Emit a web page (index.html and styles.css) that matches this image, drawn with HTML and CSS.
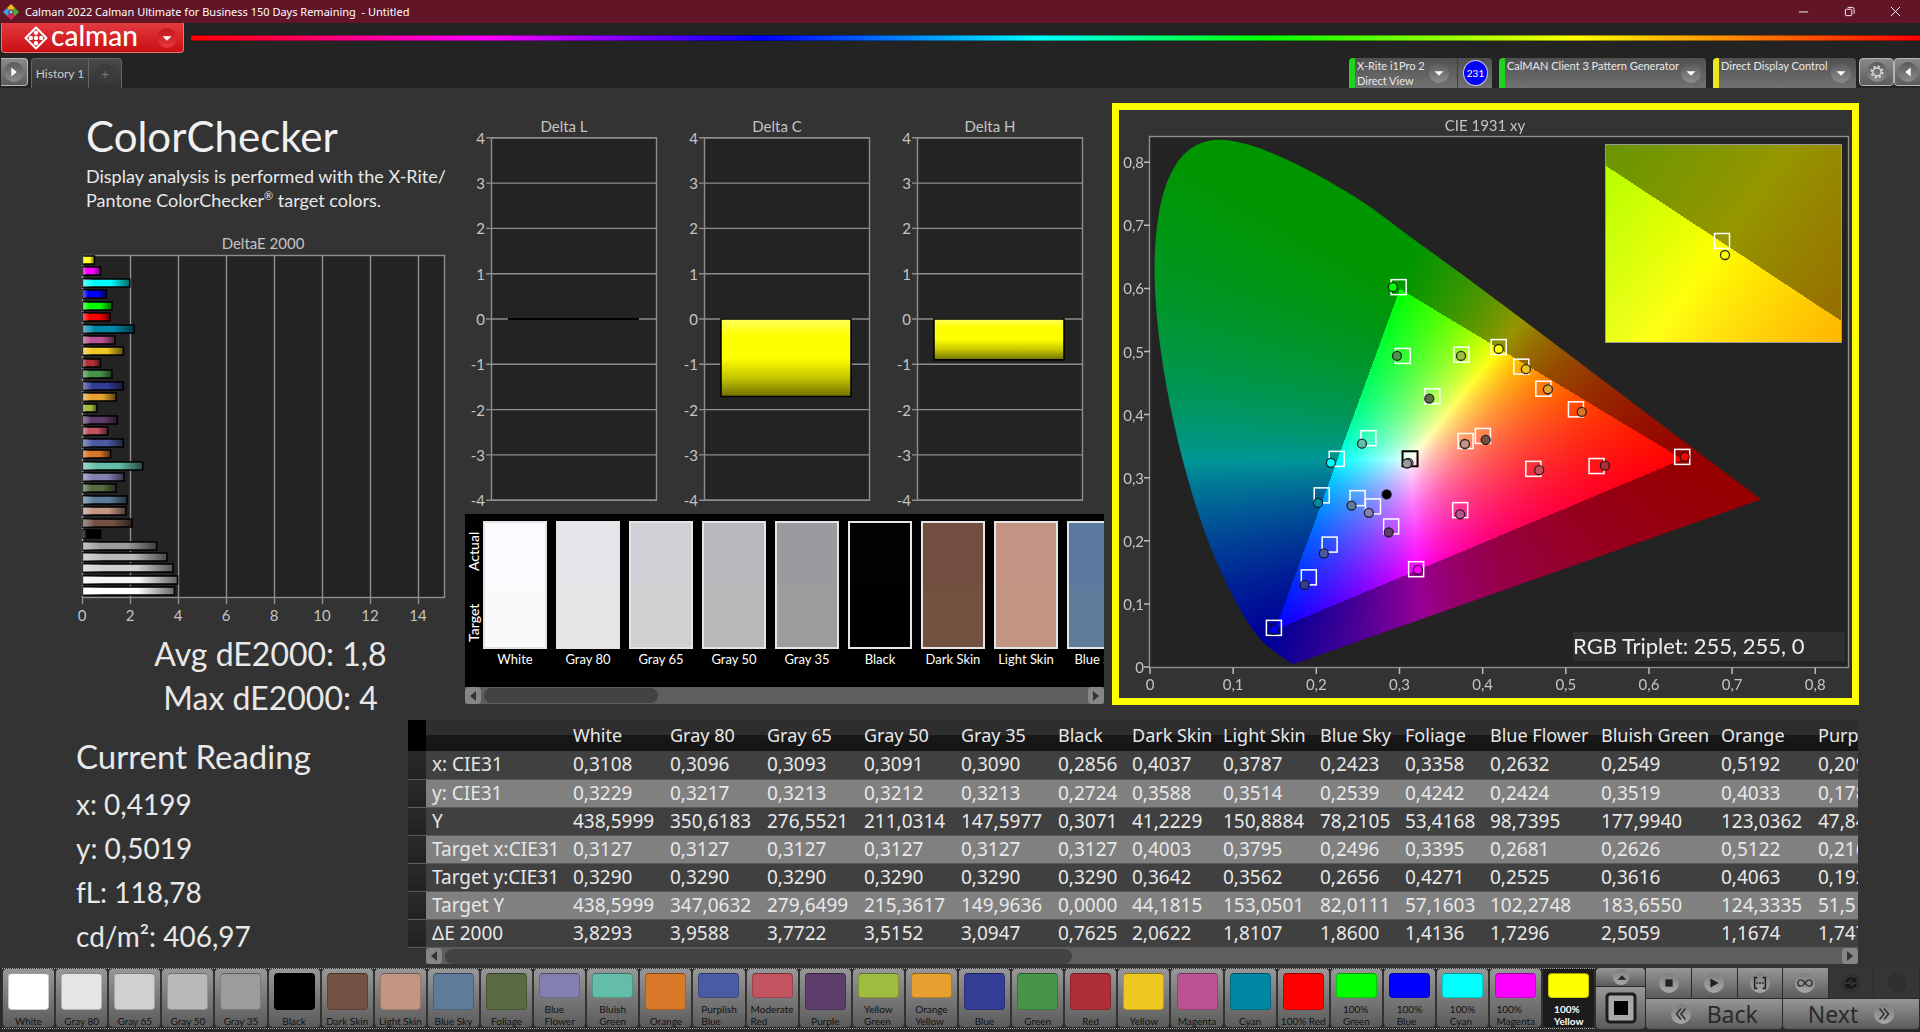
FILE: index.html
```html
<!DOCTYPE html>
<html lang="en">
<head>
<meta charset="utf-8">
<title>Calman 2022 - Untitled</title>
<link rel="stylesheet" href="styles.css">
</head>
<body>
<header class="titlebar">
  <svg class="app-icon" viewBox="0 0 16 16" aria-hidden="true"><path fill="#f4b81c" d="M8 0l4 4-4 4-4-4z"/><path fill="#3f9fe0" d="M4 4l4 4-4 4-4-4z"/><path fill="#4cae33" d="M12 4l4 4-4 4-4-4z"/><path fill="#e0245e" d="M8 8l4 4-4 4-4-4z"/><path fill="#611527" d="M8 5l3 3-3 3-3-3z"/><path fill="#8fd0f0" d="M8 6l2 2-2 2-2-2z"/></svg>
  <h1 class="title-text">Calman 2022 Calman Ultimate for Business 150 Days Remaining&nbsp; - Untitled</h1>
  <div class="window-buttons">
    <button aria-label="Minimize"><svg viewBox="0 0 12 12"><path d="M1 6.5h10"/></svg></button>
    <button aria-label="Restore"><svg viewBox="0 0 12 12"><rect x="1.5" y="3.5" width="7" height="7" rx="1"/><path d="M4 1.5h5a2 2 0 0 1 2 2v5"/></svg></button>
    <button aria-label="Close"><svg viewBox="0 0 12 12"><path d="M1 1l10 10M11 1L1 11"/></svg></button>
  </div>
</header>

<div class="brandbar">
  <button class="brand">
    <svg class="brand-mark" viewBox="0 0 24 24" aria-hidden="true"><path d="M12 1.500L22.500 12 12 22.500 1.500 12z" fill="none" stroke="#fff" stroke-width="2" stroke-linejoin="round"/><g fill="#fff"><circle cx="12" cy="6.800" r="2.200"/><circle cx="12" cy="17.200" r="2.200"/><circle cx="6.800" cy="12" r="2.200"/><circle cx="17.200" cy="12" r="2.200"/><circle cx="12" cy="12" r="2.200"/></g></svg>
    <span class="brand-name">calman</span>
    <span class="round red"><svg viewBox="0 0 20 20"><path d="M5 8h10l-5 5z" fill="#fff"/></svg></span>
  </button>
  <div class="rainbow"></div>
</div>

<nav class="tabbar">
  <button class="side-btn left" aria-label="Expand"><span class="round"><svg viewBox="0 0 20 20"><path d="M7 5l6 5-6 5z" fill="#fff"/></svg></span></button>
  <button class="tab">History 1</button><button class="tab add" aria-label="Add tab"><span class="round dim">+</span></button>
  <div class="devices">
    <div class="device meter">
      <button class="device-main"><span class="device-name">X-Rite i1Pro 2<br>Direct View</span><span class="round"><svg viewBox="0 0 20 20"><path d="M5 8h10l-5 5z" fill="#fff"/></svg></span></button>
      <span class="count">231</span>
    </div>
    <div class="device source"><button class="device-main"><span class="device-name">CalMAN Client 3 Pattern Generator</span><span class="round"><svg viewBox="0 0 20 20"><path d="M5 8h10l-5 5z" fill="#fff"/></svg></span></button></div>
    <div class="device display"><button class="device-main"><span class="device-name">Direct Display Control</span><span class="round"><svg viewBox="0 0 20 20"><path d="M5 8h10l-5 5z" fill="#fff"/></svg></span></button></div>
    <button class="side-btn" aria-label="Settings"><span class="round"><svg viewBox="0 0 20 20" fill="none" stroke="#ddd"><circle cx="10" cy="10" r="4.500" stroke-width="1.600"/><circle cx="10" cy="10" r="6.200" stroke-width="2" stroke-dasharray="2.400 2.470"/></svg></span></button>
    <button class="side-btn right" aria-label="Collapse"><span class="round"><svg viewBox="0 0 20 20"><path d="M13 5l-6 5 6 5z" fill="#fff"/></svg></span></button>
  </div>
</nav>

<main class="workspace">
  <div class="top-row">
    <section class="overview">
      <h2 class="page-title">ColorChecker</h2>
      <p class="intro">Display analysis is performed with the X-Rite/<br>Pantone ColorChecker<sup>®</sup> target colors.</p>
      <svg class="chart" id="deltae" viewBox="0 0 465 400" role="img" aria-label="DeltaE 2000"></svg>
      <p class="stat">Avg dE2000: 1,8</p>
      <p class="stat">Max dE2000: 4</p>
    </section>

    <section class="middle">
      <div class="deltas">
        <svg class="chart delta" data-title="Delta L" data-value="0" viewBox="0 0 213 426"></svg>
        <svg class="chart delta" data-title="Delta C" data-value="-1.71" viewBox="0 0 213 426"></svg>
        <svg class="chart delta" data-title="Delta H" data-value="-0.9" viewBox="0 0 213 426"></svg>
      </div>
      <div class="strip">
        <div class="strip-side"><span>Actual</span><span>Target</span></div>
        <div class="patches">
          <div class="patch"><i style="--a:#fcfbff;--t:#fafafa"></i>White</div>
          <div class="patch"><i style="--a:#e6e5eb;--t:#e5e5e5"></i>Gray 80</div>
          <div class="patch"><i style="--a:#d0cfd6;--t:#d1d1d1"></i>Gray 65</div>
          <div class="patch"><i style="--a:#b8b7be;--t:#b9b9b9"></i>Gray 50</div>
          <div class="patch"><i style="--a:#9b9a9f;--t:#9c9c9c"></i>Gray 35</div>
          <div class="patch"><i style="--a:#020204;--t:#000"></i>Black</div>
          <div class="patch"><i style="--a:#714e40;--t:#725141"></i>Dark Skin</div>
          <div class="patch"><i style="--a:#c39483;--t:#c29682"></i>Light Skin</div>
          <div class="patch"><i style="--a:#5b78a0;--t:#5e7b9c"></i>Blue Sky</div>
        </div>
      </div>
      <div class="scrollbar"><button aria-label="Scroll left"><svg viewBox="0 0 10 12"><path d="M8 1v10L2 6z"/></svg></button><div class="track"><div class="thumb short"></div></div><button aria-label="Scroll right"><svg viewBox="0 0 10 12"><path d="M2 1v10l6-5z"/></svg></button></div>
    </section>

    <section class="cie">
      <canvas id="gamut" width="733" height="588"></canvas>
      <svg class="chart" id="cieplot" viewBox="0 0 733 588" role="img" aria-label="CIE 1931 xy"></svg>
    </section>
  </div>

  <div class="bottom-row">
    <section class="reading">
      <h2>Current Reading</h2>
      <p>x: 0,4199</p>
      <p>y: 0,5019</p>
      <p>fL: 118,78</p>
      <p>cd/m²: 406,97</p>
    </section>
    <section class="data">
      <div class="table-wrap">
        <table>
          <colgroup><col class="w-grip"><col class="w-label"><col class="w-a"><col class="w-a"><col class="w-a"><col class="w-a"><col class="w-a"><col class="w-b"><col class="w-c"><col class="w-a"><col class="w-d"><col class="w-d"><col class="w-e"><col class="w-f"><col class="w-a"><col class="w-f"></colgroup>
          <thead><tr><td class="grip"></td><td></td><th>White</th><th>Gray 80</th><th>Gray 65</th><th>Gray 50</th><th>Gray 35</th><th>Black</th><th>Dark Skin</th><th>Light Skin</th><th>Blue Sky</th><th>Foliage</th><th>Blue Flower</th><th>Bluish Green</th><th>Orange</th><th>Purp</th></tr></thead>
          <tbody>
            <tr><td class="grip"></td><th>x: CIE31</th><td>0,3108</td><td>0,3096</td><td>0,3093</td><td>0,3091</td><td>0,3090</td><td>0,2856</td><td>0,4037</td><td>0,3787</td><td>0,2423</td><td>0,3358</td><td>0,2632</td><td>0,2549</td><td>0,5192</td><td>0,209</td></tr>
            <tr><td class="grip"></td><th>y: CIE31</th><td>0,3229</td><td>0,3217</td><td>0,3213</td><td>0,3212</td><td>0,3213</td><td>0,2724</td><td>0,3588</td><td>0,3514</td><td>0,2539</td><td>0,4242</td><td>0,2424</td><td>0,3519</td><td>0,4033</td><td>0,178</td></tr>
            <tr><td class="grip"></td><th>Y</th><td>438,5999</td><td>350,6183</td><td>276,5521</td><td>211,0314</td><td>147,5977</td><td>0,3071</td><td>41,2229</td><td>150,8884</td><td>78,2105</td><td>53,4168</td><td>98,7395</td><td>177,9940</td><td>123,0362</td><td>47,84</td></tr>
            <tr><td class="grip"></td><th>Target x:CIE31</th><td>0,3127</td><td>0,3127</td><td>0,3127</td><td>0,3127</td><td>0,3127</td><td>0,3127</td><td>0,4003</td><td>0,3795</td><td>0,2496</td><td>0,3395</td><td>0,2681</td><td>0,2626</td><td>0,5122</td><td>0,216</td></tr>
            <tr><td class="grip"></td><th>Target y:CIE31</th><td>0,3290</td><td>0,3290</td><td>0,3290</td><td>0,3290</td><td>0,3290</td><td>0,3290</td><td>0,3642</td><td>0,3562</td><td>0,2656</td><td>0,4271</td><td>0,2525</td><td>0,3616</td><td>0,4063</td><td>0,192</td></tr>
            <tr><td class="grip"></td><th>Target Y</th><td>438,5999</td><td>347,0632</td><td>279,6499</td><td>215,3617</td><td>149,9636</td><td>0,0000</td><td>44,1815</td><td>153,0501</td><td>82,0111</td><td>57,1603</td><td>102,2748</td><td>183,6550</td><td>124,3335</td><td>51,5</td></tr>
            <tr><td class="grip"></td><th>ΔE 2000</th><td>3,8293</td><td>3,9588</td><td>3,7722</td><td>3,5152</td><td>3,0947</td><td>0,7625</td><td>2,0622</td><td>1,8107</td><td>1,8600</td><td>1,4136</td><td>1,7296</td><td>2,5059</td><td>1,1674</td><td>1,747</td></tr>
          </tbody>
        </table>
      </div>
      <div class="scrollbar indent"><button aria-label="Scroll left"><svg viewBox="0 0 10 12"><path d="M8 1v10L2 6z"/></svg></button><div class="track"><div class="thumb long"></div></div><button aria-label="Scroll right"><svg viewBox="0 0 10 12"><path d="M2 1v10l6-5z"/></svg></button></div>
    </section>
  </div>
</main>

<footer class="toolbar">
  <div class="swatches">
    <button style="--c:#fff"><i></i><span>White</span></button>
    <button style="--c:#e5e5e5"><i></i><span>Gray 80</span></button>
    <button style="--c:#d0d0d0"><i></i><span>Gray 65</span></button>
    <button style="--c:#b9b9b9"><i></i><span>Gray 50</span></button>
    <button style="--c:#9c9c9c"><i></i><span>Gray 35</span></button>
    <button style="--c:#000"><i></i><span>Black</span></button>
    <button style="--c:#735244"><i></i><span>Dark Skin</span></button>
    <button style="--c:#c29682"><i></i><span>Light Skin</span></button>
    <button style="--c:#5e7b9c"><i></i><span>Blue Sky</span></button>
    <button style="--c:#596b42"><i></i><span>Foliage</span></button>
    <button style="--c:#8280b0"><i></i><span>Blue<br>Flower</span></button>
    <button style="--c:#63bda8"><i></i><span>Bluish<br>Green</span></button>
    <button style="--c:#d87829"><i></i><span>Orange</span></button>
    <button style="--c:#4a5ba3"><i></i><span>Purplish<br>Blue</span></button>
    <button style="--c:#c25361"><i></i><span>Moderate<br>Red</span></button>
    <button style="--c:#5c3d6b"><i></i><span>Purple</span></button>
    <button style="--c:#9fbb40"><i></i><span>Yellow<br>Green</span></button>
    <button style="--c:#e6a02f"><i></i><span>Orange<br>Yellow</span></button>
    <button style="--c:#343d96"><i></i><span>Blue</span></button>
    <button style="--c:#479549"><i></i><span>Green</span></button>
    <button style="--c:#af2f39"><i></i><span>Red</span></button>
    <button style="--c:#eec722"><i></i><span>Yellow</span></button>
    <button style="--c:#bb5392"><i></i><span>Magenta</span></button>
    <button style="--c:#0087a6"><i></i><span>Cyan</span></button>
    <button style="--c:#f00"><i></i><span>100% Red</span></button>
    <button style="--c:#0f0"><i></i><span>100%<br>Green</span></button>
    <button style="--c:#00f"><i></i><span>100%<br>Blue</span></button>
    <button style="--c:#0ff"><i></i><span>100%<br>Cyan</span></button>
    <button style="--c:#f0f"><i></i><span>100%<br>Magenta</span></button>
    <button class="selected" style="--c:#ff0"><i></i><span>100%<br>Yellow</span></button>
  </div>
  <div class="pattern">
    <button class="up" aria-label="Pattern menu"><span class="round"><svg viewBox="0 0 20 20"><path d="M5 12h10l-5-5z" fill="#222"/></svg></span></button>
    <button class="window" aria-label="Pattern window"><svg viewBox="0 0 32 32"><rect x="2" y="2" width="28" height="28" rx="3" fill="#a8a8a8" stroke="#1c1c1c" stroke-width="3"/><rect x="9" y="9" width="14" height="14"/></svg></button>
  </div>
  <div class="controls">
    <button aria-label="Stop"><span class="round"><svg viewBox="0 0 20 20"><path d="M6 6h8v8H6z" fill="#222"/></svg></span></button>
    <button aria-label="Read"><span class="round"><svg viewBox="0 0 20 20"><path d="M6 5l9 5-9 5z" fill="#222"/></svg></span></button>
    <button aria-label="Read series"><span class="round"><svg viewBox="0 0 20 20" fill="none" stroke="#222" stroke-width="1.800"><path d="M7 4H4v12h3M13 4h3v12h-3"/><path d="M6 10h8" stroke-dasharray="2 1"/></svg></span></button>
    <button aria-label="Read continuous"><span class="round"><svg viewBox="0 0 20 20" fill="none" stroke="#333" stroke-width="1.600"><path d="M10 10C8 7 7 6.500 5.500 6.500a3.500 3.500 0 0 0 0 7C7 13.500 8 13 10 10s3-3.500 4.500-3.500a3.500 3.500 0 0 1 0 7C13 13.500 12 13 10 10z"/></svg></span></button>
    <button class="off" aria-label="Refresh" disabled><span class="round dim"><svg viewBox="0 0 20 20" fill="none" stroke="#161616" stroke-width="2.500"><path d="M5 9a5 5 0 0 1 9-2M15 11a5 5 0 0 1-9 2"/><path d="M16 3v6h-6zM4 17v-6h6z" fill="#161616" stroke="none"/></svg></span></button>
    <button class="off" aria-label="Record" disabled><span class="round dim"></span></button>
    <button class="nav"><span class="round"><svg viewBox="0 0 20 20" fill="none" stroke="#333" stroke-width="1.800"><path d="M10 4l-5 6 5 6M15 4l-5 6 5 6"/></svg></span>Back</button>
    <button class="nav">Next<span class="round"><svg viewBox="0 0 20 20" fill="none" stroke="#333" stroke-width="1.800"><path d="M5 4l5 6-5 6M10 4l5 6-5 6"/></svg></span></button>
  </div>
</footer>
<script src="charts.js"></script>
</body>
</html>
```
FILE: styles.css
```css
* { box-sizing: border-box; }
html, body { margin: 0; }
body {
  min-height: 100vh;
  display: flex;
  flex-direction: column;
  background: #232323;
  color: #e8e8e8;
  font-family: Lato, "Noto Sans", sans-serif;
}
button { font: inherit; color: inherit; border: 0; padding: 0; background: none; }
h1, h2, p { margin: 0; font-weight: 400; }
svg { display: block; }

.titlebar { display: flex; align-items: center; height: 23px; background: #611527; padding-left: 3px; }
.app-icon { width: 16px; height: 16px; }
.title-text { flex: 1; margin-left: 6px; font: 11px/23px "Noto Sans", sans-serif; color: #fff; }
.window-buttons { display: flex; padding-right: 2px; }
.window-buttons button { width: 46px; height: 20px; display: grid; place-items: center; }
.window-buttons svg { width: 11px; height: 11px; fill: none; stroke: #fff; }

.round {
  flex: none;
  width: 20px; height: 20px;
  border-radius: 50%;
  display: grid; place-items: center;
  background: linear-gradient(#5a5a5a, #8c8c8c);
}
.round svg { width: 18px; height: 18px; }
.round.red { background: linear-gradient(#c3151a, #e5383c); }
.round.dim { background: #3b3b3b; color: #777; font-size: 14px; line-height: 20px; }

.brandbar { display: flex; align-items: flex-start; height: 35px; }
.brand {
  display: flex; align-items: center;
  width: 183px; height: 30px; margin-left: 1px; padding: 0 6px 0 22px;
  background: linear-gradient(#e33a3e, #c90f14);
  border: 1px solid #d9777a; border-top: 0; border-radius: 0 0 4px 4px;
}
.brand-mark { width: 24px; height: 24px; }
.brand-name { flex: 1; margin-left: 3px; text-align: left; font-size: 28px; line-height: 24px; font-weight: 500; color: #fff; padding-bottom: 6px; }
.rainbow {
  flex: 1; height: 6px; margin: 12px 0 0 7px;
  background: linear-gradient(90deg, #f00, #f0f 17%, #00f 33%, #0ff 49%, #0f0 62%, #ff0 80%, #f00);
  border-top: 1px solid #0006; border-bottom: 1px solid #0006;
}

.tabbar { display: flex; height: 30px; }
.side-btn {
  width: 35px; height: 28px; display: grid; place-items: center;
  background: linear-gradient(#8a8a8a, #5c5c5c); border: 1px solid #b5b5b5; border-radius: 4px;
}
.side-btn.left { width: 27px; margin: 0 3px 0 1px; border-left: 0; border-radius: 0 4px 4px 0; }
.side-btn.right { width: 26px; border-right: 0; border-radius: 4px 0 0 4px; }
.tab {
  width: 58px; background: linear-gradient(#484848, #333); color: #ccc; font-size: 12px;
  border: 1px solid #666; border-bottom: 0; border-radius: 4px 0 0 0;
}
.tab.add { width: 34px; margin-left: -1px; display: grid; place-items: center; border-radius: 0 4px 0 0; }
.devices { display: flex; margin-left: auto; }
.device {
  display: flex; margin-right: 7px; border-radius: 4px 4px 0 0; overflow: hidden;
  background: linear-gradient(#505050, #727272); border-left: 6px solid #1fd31f;
}
.device.meter { width: 143px; }
.device.source { width: 207px; }
.device.display { width: 143px; margin-right: 3px; border-left-color: #e8e81c; }
.device-main { flex: 1; display: flex; justify-content: space-between; align-items: center; padding: 0 5px 0 2px; text-align: left; white-space: nowrap; }
.device-name { align-self: flex-start; font-size: 11px; line-height: 15px; }
.meter .device-main { border-right: 1px solid #3c3c3c; padding-right: 8px; }
.count {
  width: 25px; height: 26px; margin: 2px 4px 0 5px; border-radius: 50%;
  background: #00f; border: 1px solid #ccd; color: #fff; font-size: 10px; line-height: 24px; text-align: center;
}

.workspace { flex: 1; background: #333; padding-bottom: 3px; }
.top-row { display: grid; grid-template-columns: 465fr 647fr 747fr; padding-right: 61px; align-items: start; }
.overview { min-width: 0; padding-top: 24px; }
.page-title { padding-left: 86px; font-size: 42px; line-height: 48px; color: #f0f0f0; }
.intro { padding-left: 86px; margin: 4px 0 20px; font-size: 18px; line-height: 24px; white-space: nowrap; }
.intro sup { font-size: 11px; line-height: 0; }
.chart { width: 100%; height: auto; }
.chart text { fill: #c4c4c4; font-size: 15px; }
.stat { padding-left: 76px; text-align: center; font-size: 32px; line-height: 44px; }
.middle { min-width: 0; padding-right: 8px; }
.deltas { display: grid; grid-template-columns: repeat(3, 1fr); }
.strip { display: flex; height: 173px; background: #000; color: #fff; overflow: hidden; }
.strip-side {
  flex: none; width: 18px; height: 141px; padding: 13px 0 18px;
  display: flex; justify-content: space-between; writing-mode: vertical-rl; transform: rotate(180deg);
  flex-direction: row-reverse; font-size: 14px; line-height: 18px; font-weight: 500;
}
.patches { display: flex; gap: 9px; padding-top: 7px; }
.patch { flex: none; width: 64px; font-size: 13px; line-height: 20px; text-align: center; white-space: nowrap; }
.patch i { display: block; height: 128px; border: 2px solid #e4e4e4; background: linear-gradient(var(--a) 50%, var(--t) 50%); }

.scrollbar { display: flex; height: 17px; background: #5e5e5e; }
.scrollbar button { width: 16px; display: grid; place-items: center; background: #868686; border-radius: 4px; }
.scrollbar svg { width: 10px; height: 12px; fill: #333; }
.track { flex: 1; padding: 1px 3px; }
.thumb { height: 15px; border-radius: 8px; background: #434343; }
.thumb.short { width: 29%; }
.thumb.long { width: 45%; }
.scrollbar.indent { margin-left: 18px; height: 16px; }

.cie { display: grid; border: 7px solid #ff0; margin-top: 15px; }
.cie canvas, .cie svg { grid-area: 1 / 1; width: 100%; height: auto; }
.chart .readout { font-size: 22px; fill: #eee; }

.bottom-row { display: grid; grid-template-columns: 408fr 1450fr; padding-right: 62px; }
.reading { padding: 14px 0 0 76px; font-size: 28px; line-height: 44px; }
.reading h2 { font-size: 33px; line-height: 44px; margin-bottom: 4px; }
.data { min-width: 0; }
.table-wrap { overflow: hidden; }
table { table-layout: fixed; border-collapse: collapse; width: 1520px; font: 19px/27px "Noto Sans", sans-serif; white-space: nowrap; }
thead { font-size: 18px; }
.w-grip { width: 18px; } .w-label { width: 141px; } .w-a { width: 97px; } .w-b { width: 74px; }
.w-c { width: 91px; } .w-d { width: 85px; } .w-e { width: 111px; } .w-f { width: 120px; }
th, td { height: 28px; padding: 0 0 0 6px; text-align: left; font-weight: 400; overflow: hidden; }
thead tr { height: 31px; background: linear-gradient(#2e2e2e 50%, #181818 50%, #141414); }
thead .grip { background: #000; }
tbody tr { background: #404040; border-bottom: 1px solid #5a5a5a; }
tbody tr:nth-child(even) { background: #808080; }
tbody .grip { background: linear-gradient(#2b2b2b, #212121); }

.toolbar { display: flex; padding: 0 1px 3px 2px; background: #2a2a2a; }
.toolbar button { background: linear-gradient(#979797, #5b5b5b); }
.swatches { flex: 1595; display: grid; grid-template-columns: repeat(30, minmax(0, 1fr)); border-top: 1px dotted #aaa; border-bottom: 1px dotted #aaa; }
.swatches button {
  display: flex; flex-direction: column; align-items: center; height: 58px; padding-top: 4px;
  border: 1px solid #333; border-width: 0 1px; border-radius: 4px;
  color: #111; font-size: 10px; line-height: 12px; white-space: nowrap;
}
.swatches i { flex: 1; width: 41px; border-radius: 4px; background: var(--c); border: 1px solid #0003; border-top-color: #0006; }
.swatches span { padding: 5px 0 0; text-align: left; }
.swatches .selected { background: #1c1c1c; color: #fff; font-weight: 700; }
.pattern { flex: 49; display: flex; flex-direction: column; gap: 1px; padding: 0 1px; }
.pattern button { display: grid; place-items: center; }
.pattern .up { height: 18px; border-radius: 4px 4px 0 0; }
.pattern .up .round { width: 16px; height: 16px; }
.pattern .window { flex: 1; border-radius: 0 0 4px 4px; }
.window svg { width: 32px; height: 32px; }
.controls { flex: 273; display: grid; grid-template-columns: repeat(6, 1fr); grid-template-rows: 30px 30px; gap: 1px; }
.controls button { display: flex; align-items: center; justify-content: center; }
.controls .off { background: #363636; }
.controls .nav { grid-column: span 3; gap: 16px; font: 23px/30px "Noto Sans", sans-serif; color: #2a2a2a; border-radius: 0 0 4px 4px; }
.toolbar .round { background: linear-gradient(#7d7d7d, #a9a9a9); }
.toolbar .round.dim { background: #303030; }
```
FILE: charts.js
```js
const NS = 'http://www.w3.org/2000/svg';
function add(parent, name, attrs, text) {
  const el = document.createElementNS(NS, name);
  for (const k in attrs) el.setAttribute(k, attrs[k]);
  if (text !== undefined) el.textContent = text;
  parent.appendChild(el);
  return el;
}
const GRID = '#8e8e8e';

/* DeltaE 2000 horizontal bars */
(function () {
  const svg = document.getElementById('deltae');
  const x0 = 82, x1 = 444, top = 23, bottom = 365, unit = 24;
  const bars = [
    ['#ffff20', 0.5], ['#f0f', 0.75], ['#0ff', 1.97], ['#00f', 1.0], ['#0f0', 1.23], ['#f00', 1.15],
    ['#0087a6', 2.15], ['#bb5392', 1.35], ['#eec722', 1.7], ['#af2f39', 0.75], ['#479549', 1.23], ['#343d96', 1.7],
    ['#e6a02f', 1.4], ['#9fbb40', 0.6], ['#5c3d6b', 1.45], ['#c25361', 1.05], ['#4a5ba3', 1.7], ['#d87829', 1.17],
    ['#63bda8', 2.51], ['#8280b0', 1.73], ['#596b42', 1.41], ['#5e7b9c', 1.86], ['#c29682', 1.81], ['#735244', 2.06],
    ['#000', 0.76], ['#9c9c9c', 3.09], ['#b9b9b9', 3.52], ['#d0d0d0', 3.77], ['#f4f4f4', 3.96], ['#fff', 3.83]
  ];
  const defs = add(svg, 'defs', {});
  const g = add(defs, 'linearGradient', { id: 'sheen' });
  add(g, 'stop', { offset: 0, 'stop-color': '#fff', 'stop-opacity': 0.4 });
  add(g, 'stop', { offset: 0.25, 'stop-color': '#fff', 'stop-opacity': 0 });
  add(g, 'stop', { offset: 0.6, 'stop-color': '#000', 'stop-opacity': 0 });
  add(g, 'stop', { offset: 1, 'stop-color': '#000', 'stop-opacity': 0.6 });
  add(svg, 'text', { x: 263, y: 17, 'text-anchor': 'middle' }, 'DeltaE 2000');
  add(svg, 'rect', { x: x0 + 0.5, y: top + 0.5, width: x1 - x0, height: bottom - top, fill: '#232323', stroke: GRID, 'stroke-width': 1.4 });
  for (let v = 0; v <= 14; v += 2) {
    add(svg, 'path', { d: `M${x0 + 0.5 + v * unit} ${top}V${bottom + 7}`, stroke: GRID, 'stroke-width': 1.4 });
    add(svg, 'text', { x: x0 + v * unit, y: 389, 'text-anchor': 'middle' }, v);
  }
  bars.forEach(([c, v], i) => {
    const r = { x: x0 + 0.5, y: Math.round(28 + i * 11.42 - 4), width: v * unit, height: 8 };
    add(svg, 'rect', { ...r, fill: c, stroke: '#000', 'stroke-width': 1.5 });
    add(svg, 'rect', { ...r, fill: 'url(#sheen)' });
  });
})();

/* Delta L / C / H columns */
document.querySelectorAll('.delta').forEach((svg, n) => {
  const y = v => 231 - v * 45.3;
  const value = +svg.dataset.value;
  const g = add(add(svg, 'defs', {}), 'linearGradient', { id: 'col' + n, x1: 0, y1: 0, x2: 0, y2: 1 });
  [[0, '#ffff60'], [0.22, '#ffff00'], [0.5, '#ffff00'], [0.75, '#c8c800'], [1, '#707000']]
    .forEach(([o, c]) => add(g, 'stop', { offset: o, 'stop-color': c }));
  add(svg, 'text', { x: 99, y: 44, 'text-anchor': 'middle' }, svg.dataset.title);
  add(svg, 'rect', { x: 26.5, y: y(4), width: 165, height: y(-4) - y(4), fill: '#232323', stroke: GRID, 'stroke-width': 1.4 });
  for (let v = -4; v <= 4; v++) {
    add(svg, 'path', { d: `M21 ${y(v)}H191`, stroke: GRID, 'stroke-width': 1.4 });
    add(svg, 'text', { x: 20, y: y(v) + 6, 'text-anchor': 'end' }, v);
  }
  if (value) {
    add(svg, 'rect', { x: 43, y: y(0), width: 130, height: -value * 45.3, fill: `url(#col${n})`, stroke: '#000', 'stroke-width': 1.5 });
  } else {
    add(svg, 'path', { d: `M43 ${y(0)}h131`, stroke: '#000', 'stroke-width': 2 });
  }
});

/* CIE 1931 chromaticity */
(function () {
  const svg = document.getElementById('cieplot');
  const px = x => 31 + x * 831.6, py = y => 557 - y * 631;
  const locus = [[.1741,.005],[.1733,.0048],[.1714,.0051],[.1689,.0069],[.1644,.0109],[.1566,.0177],[.144,.0297],[.1355,.0399],[.1241,.0578],[.1096,.0868],[.0913,.1327],[.0687,.2007],[.0454,.295],[.0235,.4127],[.0082,.5384],[.0039,.6548],[.0139,.7502],[.0389,.812],[.0743,.8338],[.1142,.8262],[.1547,.8059],[.1929,.7816],[.2296,.7543],[.2658,.7243],[.3016,.6923],[.3731,.6245],[.4441,.5547],[.5125,.4866],[.5752,.4242],[.627,.3725],[.6915,.3083],[.7347,.2653]];
  const tri = [[.64, .33], [.3, .6], [.15, .06]];
  const inside = (x, y) => tri.every(([ax, ay], i) => {
    const [bx, by] = tri[(i + 1) % 3];
    return (bx - ax) * (y - ay) - (by - ay) * (x - ax) >= 0;
  });
  function color(x, y) {
    y = Math.max(y, 0.0001);
    const X = x / y, Z = (1 - x - y) / y;
    const lin = [3.2406 * X - 1.5372 - 0.4986 * Z, -0.9689 * X + 1.8758 + 0.0415 * Z, 0.0557 * X - 0.204 + 1.057 * Z].map(v => Math.max(0, v));
    const m = Math.max(...lin), k = inside(x, y) ? 255 : 150;
    return lin.map(v => k * v / m);
  }
  function field(w, h, toX, toY) {
    const c = document.createElement('canvas');
    c.width = w; c.height = h;
    const cx = c.getContext('2d'), img = cx.createImageData(w, h);
    for (let j = 0; j < h; j++) for (let i = 0; i < w; i++) {
      const [r, g, b] = color(toX(i), toY(j)), o = (j * w + i) * 4;
      img.data[o] = r; img.data[o + 1] = g; img.data[o + 2] = b; img.data[o + 3] = 255;
    }
    cx.putImageData(img, 0, 0);
    return c;
  }
  const ctx = document.getElementById('gamut').getContext('2d');
  ctx.fillStyle = '#232323';
  ctx.fillRect(31, 26, 699, 531);
  ctx.save();
  ctx.beginPath();
  const p = locus.map(([x, y]) => [px(x), py(y) - (y > 0.7 ? 3 : 0)]);
  ctx.moveTo(...p[0]);
  for (let i = 1; i < p.length - 1; i++) {
    ctx.quadraticCurveTo(p[i][0], p[i][1], (p[i][0] + p[i + 1][0]) / 2, (p[i][1] + p[i + 1][1]) / 2);
  }
  ctx.lineTo(...p[p.length - 1]);
  ctx.closePath();
  ctx.clip();
  ctx.drawImage(field(733, 588, i => (i - 31) / 831.6, j => (557 - j) / 631), 0, 0);
  ctx.restore();
  ctx.drawImage(field(236, 198, i => .4193 + (i - 117) / 4700, j => .5053 + (98 - j) / 3900), 486, 34);

  add(svg, 'text', { x: 366, y: 21, 'text-anchor': 'middle' }, 'CIE 1931 xy');
  add(svg, 'rect', { x: 30.5, y: 26.5, width: 699, height: 531, fill: 'none', stroke: GRID, 'stroke-width': 1.4 });
  for (let v = 0; v <= 8; v++) {
    const label = v ? '0,' + v : '0';
    add(svg, 'path', { d: `M${px(v / 10)} 558v6M25 ${py(v / 10)}h6`, stroke: '#bbb', 'stroke-width': 1.5 });
    add(svg, 'text', { x: px(v / 10), y: 580, 'text-anchor': 'middle' }, label);
    add(svg, 'text', { x: 25, y: py(v / 10) + 6, 'text-anchor': 'end' }, label);
  }
  const box = (x, y, c) => add(svg, 'rect', { x: x - 7.5, y: y - 7.5, width: 15, height: 15, fill: 'none', stroke: c, 'stroke-width': 1.5 });
  const dot = (x, y, c) => add(svg, 'circle', { cx: x, cy: y, r: 4.5, fill: c, stroke: '#111', 'stroke-opacity': 0.85, 'stroke-width': 1.3 });
  [
    ['#735244', .4003, .3662, .4037, .3598], ['#c29682', .3795, .3582, .3787, .3534], ['#5e7b9c', .2496, .2676, .2423, .2559],
    ['#596b42', .3395, .4291, .3358, .4252], ['#8280b0', .2681, .2545, .2632, .2444], ['#63bda8', .2626, .3626, .2549, .3539],
    ['#d87829', .5122, .4083, .5192, .4043], ['#4a5ba3', .216, .194, .209, .180], ['#c25361', .461, .314, .468, .312],
    ['#5c3d6b', .290, .2227, .287, .2135], ['#9fbb40', .3745, .495, .374, .493], ['#e6a02f', .473, .441, .4785, .440],
    ['#343d96', .191, .142, .186, .130], ['#479549', .304, .493, .297, .493], ['#af2f39', .537, .3185, .547, .319],
    ['#eec722', .4465, .476, .452, .472], ['#bb5392', .373, .2486, .373, .242], ['#0087a6', .2065, .272, .202, .260],
    ['#f00', .64, .333, .643, .333], ['#0f0', .299, .602, .292, .602], ['#00f', .149, .062, .149, .059],
    ['#0ff', .2245, .3298, .2175, .3235], ['#f0f', .320, .155, .3222, .154], ['#ff0', .4193, .507, .4193, .504]
  ].forEach(([c, tx, ty, ax, ay]) => { box(px(tx), py(ty), '#fff'); dot(px(ax), py(ay), c); });
  box(px(.3127), py(.33), '#000').setAttribute('stroke-width', 2);
  dot(px(.3108), py(.3235), '#ddd');
  dot(px(.309), py(.3225), '#9c9c9c');
  dot(px(.2846), py(.2735), '#000');

  add(svg, 'rect', { x: 486.5, y: 34.5, width: 236, height: 198, fill: 'none', stroke: '#999' });
  box(603, 131, '#fff');
  dot(606, 145, 'none');
  add(svg, 'rect', { x: 454, y: 522, width: 272, height: 29, fill: '#303030' });
  add(svg, 'text', { x: 454, y: 544, class: 'readout' }, 'RGB Triplet: 255, 255, 0');
})();
```
